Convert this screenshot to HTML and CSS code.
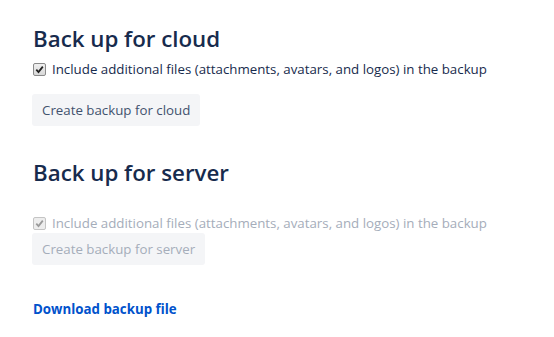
FILE: index.html
```html
<!DOCTYPE html>
<html lang="en">
<head>
<meta charset="utf-8">
<link rel="stylesheet" href="styles.css">
</head>
<body>
<main class="page">
  <section class="block">
    <h2 class="title">Back up for cloud</h2>
    <label class="check">
      <span class="box"><svg viewBox="0 0 11 11" width="11" height="11"><path d="M2.3 5.6 L4.5 8 L8.8 2.6" fill="none" stroke="#222" stroke-width="1.8"/></svg></span>
      <span class="label">Include additional files (attachments, avatars, and logos) in the backup</span>
    </label>
    <button class="btn">Create backup for cloud</button>
  </section>
  <section class="block second">
    <h2 class="title">Back up for server</h2>
    <label class="check disabled">
      <span class="box"><svg viewBox="0 0 11 11" width="11" height="11"><path d="M2.3 5.6 L4.5 8 L8.8 2.6" fill="none" stroke="#9a9a9a" stroke-width="1.8"/></svg></span>
      <span class="label">Include additional files (attachments, avatars, and logos) in the backup</span>
    </label>
    <button class="btn" disabled>Create backup for server</button>
  </section>
  <a class="download" href="#">Download backup file</a>
</main>
</body>
</html>
```

FILE: styles.css
```css
html, body {
  margin: 0;
  padding: 0;
  background: #ffffff;
}
body {
  font-family: "Open Sans", "Noto Sans", sans-serif;
  color: #172b4d;
}
.page {
  padding: 25px 32px 0 32px;
  display: flex;
  flex-direction: column;
  align-items: flex-start;
}
.block {
  display: flex;
  flex-direction: column;
  align-items: flex-start;
}
.second {
  margin-top: 33px;
}
.title {
  margin: 0;
  font-size: 22.3px;
  line-height: 28px;
  font-weight: 600;
  color: #172b4d;
  padding-left: 1px;
}
.check {
  margin-top: 6px;
  display: flex;
  align-items: center;
  height: 20px;
  gap: 6px;
  padding-left: 1px;
  font-size: 13.3px;
  color: #172b4d;
}
.second .check {
  margin-top: 26px;
}
.box {
  width: 11px;
  height: 11px;
  border: 1px solid #8a8a8a;
  border-radius: 2px;
  background: linear-gradient(#f0f0f0, #d8d8d8);
  display: flex;
  align-items: center;
  justify-content: center;
  overflow: hidden;
}
.box svg {
  width: 11px;
  height: 11px;
}
.disabled .box {
  border-color: #c4c4c4;
  background: #ededed;
}
.disabled {
  color: #a5adba;
}
.btn {
  margin-top: 15px;
  height: 32px;
  padding: 0 10px;
  border: 0;
  border-radius: 3px;
  background: #f4f5f7;
  color: #42526e;
  font-family: inherit;
  font-size: 13.3px;
  line-height: 32px;
}
.btn:disabled {
  margin-top: 0;
  color: #a5adba;
}
.download {
  margin-top: 34px;
  padding-left: 1px;
  font-size: 13.3px;
  line-height: 20px;
  font-weight: 700;
  color: #0052cc;
  text-decoration: none;
}
```
